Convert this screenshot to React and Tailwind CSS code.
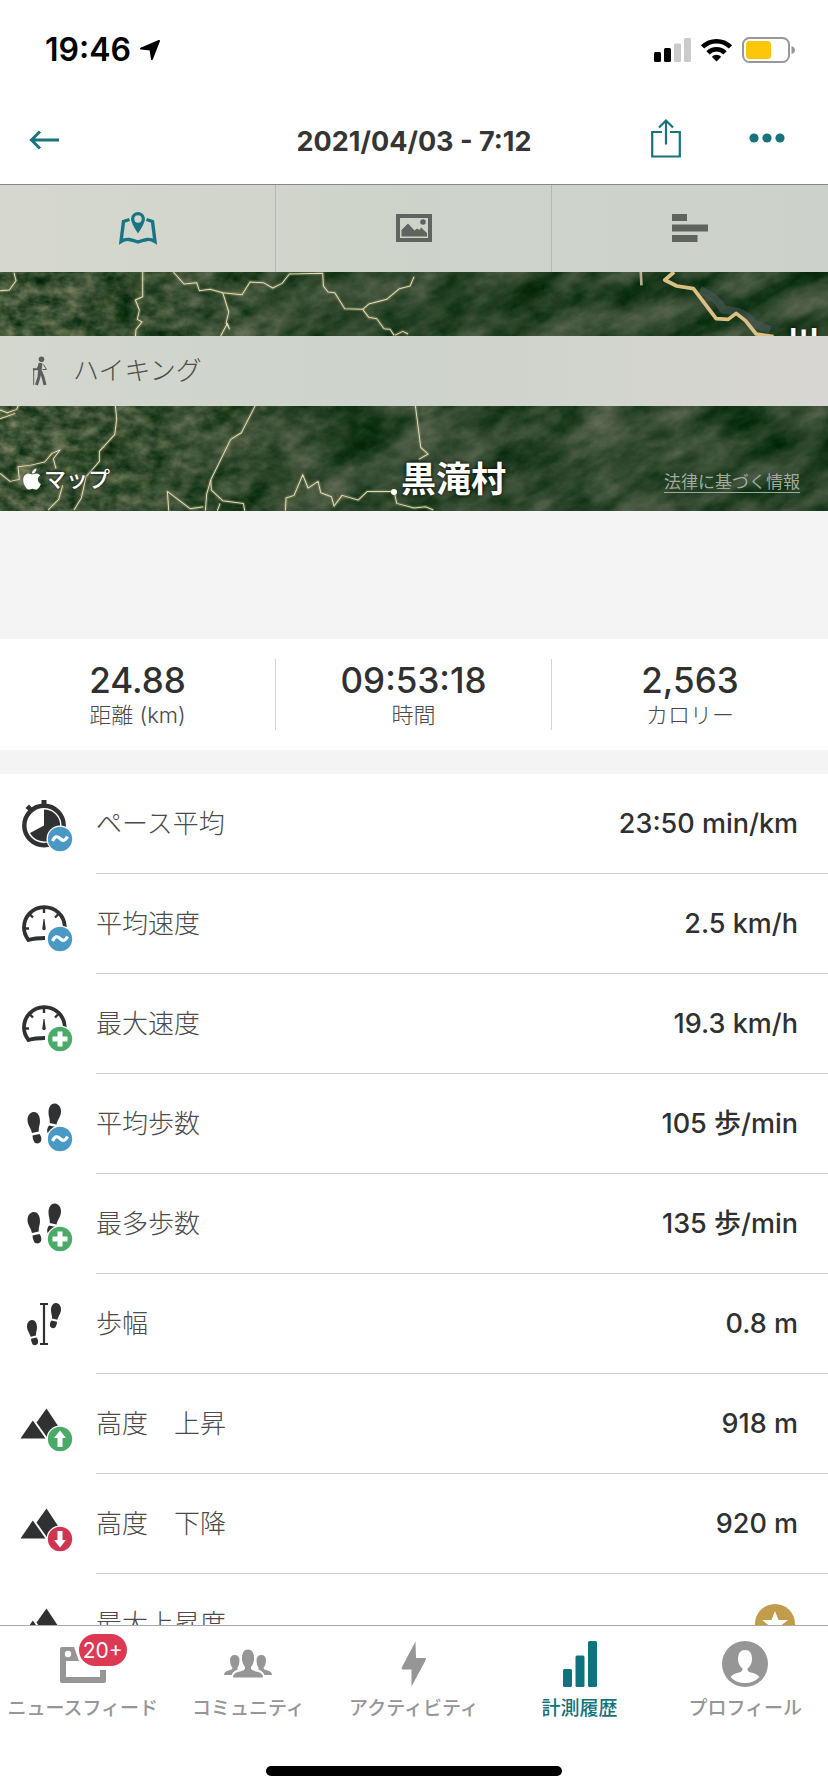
import { FaApple } from "react-icons/fa";

const roads = [
  "M0 92 L28 90 L48 62 L42 38",
  "M428 36 L428 110 L406 120 L418 150 L412 178 L426 186 L408 208 L406 230",
  "M520 36 L552 72 L590 68 L598 92 L630 88 L668 98 L726 104 L750 66 L790 68 L818 84 L846 70 L868 42 L968 40 L970 78 L984 96 L1004 98 L1034 146 L1088 148 L1106 172 L1130 176 L1152 206 L1170 208 L1182 226",
  "M668 98 L686 156 L678 190 L688 206 L682 190 L662 228",
  "M1088 148 L1106 132 L1160 118 L1198 86 L1230 78 L1242 50",
  "M1184 226 L1208 214 L1224 222",
  "M0 450 L22 458 L50 448 L56 434 M0 476 L46 460",
  "M346 436 L350 478 L344 524 L298 574 L298 604 L258 650 L244 714 L222 750",
  "M0 640 L30 664 L58 658 L54 620 L90 616 L134 606 L156 580 L180 570 L160 596 L168 626",
  "M144 750 L176 718 L188 676",
  "M766 436 L724 518 L692 538 L632 660 L620 702 L616 752",
  "M632 660 L634 690 L668 722 L730 730 L734 752",
  "M506 752 L502 694 L570 746 L610 740 M652 752 L660 730",
  "M856 752 L858 714 L882 706 L908 644 L924 684 L954 664 L962 698 L994 710 L1002 738 L1026 706 L1074 720 L1102 694 L1182 694",
  "M1182 694 L1190 730 L1242 744 L1276 740 L1300 750",
  "M1246 438 L1262 562 L1284 582 L1256 598",
];

const DARK = "#303132";

const TerrainMap = () => (
  <svg
    className="absolute inset-0 h-full w-full"
    viewBox="0 0 828 326"
    preserveAspectRatio="xMidYMid slice"
    aria-hidden="true"
  >
    <defs>
      <filter id="forest" x="0" y="0" width="100%" height="100%" colorInterpolationFilters="sRGB">
        <feTurbulence type="fractalNoise" baseFrequency="0.014 0.034" numOctaves="5" seed="8" />
        <feColorMatrix values="0.62 0 0 0 -0.14  0.42 0 0 0 0.06  0.5 0 0 0 -0.08  0 0 0 0 1" />
      </filter>
      <filter id="scrub" x="0" y="0" width="100%" height="100%" colorInterpolationFilters="sRGB">
        <feTurbulence type="fractalNoise" baseFrequency="0.06 0.09" numOctaves="4" seed="3" />
        <feColorMatrix values="0.85 0 0 0 -0.16  0.65 0 0 0 0.02  0.6 0 0 0 -0.08  0 0 0 0 1" />
      </filter>
      <linearGradient id="fade">
        <stop offset="0" stopColor="#fff" stopOpacity="0.8" />
        <stop offset="0.2" stopColor="#fff" stopOpacity="0.5" />
        <stop offset="0.4" stopColor="#fff" stopOpacity="0.2" />
        <stop offset="1" stopColor="#fff" stopOpacity="0.12" />
      </linearGradient>
      <mask id="west">
        <rect width="828" height="326" fill="url(#fade)" />
      </mask>
    </defs>
    <rect width="828" height="326" fill="#2b4429" />
    <g transform="rotate(-28 414 163)">
      <rect x="-100" y="-240" width="1030" height="800" filter="url(#forest)" />
    </g>
    <g mask="url(#west)">
      <rect width="828" height="326" filter="url(#scrub)" />
    </g>
    <g transform="translate(0 75) scale(0.3334)" fill="none" strokeLinejoin="round">
      {roads.map((d) => (
        <path key={d} d={d} stroke="#a08f6c" strokeOpacity="0.35" strokeWidth="11" />
      ))}
      {roads.map((d) => (
        <path key={d} d={d} stroke="#dfe0b4" strokeWidth="3" />
      ))}
      <path d="M2100 90 Q2150 110 2170 150 Q2230 150 2260 190 L2310 210" stroke="#545b63" strokeOpacity="0.5" strokeWidth="24" />
      <path d="M2022 36 L1994 60 L2030 78 L2080 86 L2148 176 L2184 178 L2208 160 L2236 182 L2268 222 L2320 230" stroke="#dcc083" strokeWidth="11" />
      <path d="M1922 36 L1924 76" stroke="#b3b18e" strokeWidth="8" />
    </g>
  </svg>
);

const StatusBar = () => (
  <div className="flex h-[92px] shrink-0 items-center justify-between pt-2 pr-[33px] pl-[45px]">
    <div className="flex items-center gap-2">
      <span className="text-[32px] leading-none font-semibold text-black">19:46</span>
      <svg width="22" height="22" viewBox="0 0 22 22" aria-hidden="true">
        <path d="M20 2 L2 9.6 L11.5 10.6 L13 20 Z" fill="#000" stroke="#000" strokeWidth="2" strokeLinejoin="round" />
      </svg>
    </div>
    <div className="flex items-center gap-[10px]">
      <svg width="37" height="24" viewBox="0 0 37 24" aria-hidden="true">
        <rect x="0" y="14" width="7" height="10" rx="1.5" />
        <rect x="10" y="10" width="7" height="14" rx="1.5" />
        <rect x="20" y="5.500" width="7" height="18.500" rx="1.5" fill="#cbcbcb" />
        <rect x="30" y="0" width="7" height="24" rx="1.5" fill="#cbcbcb" />
      </svg>
      <svg width="31" height="24" viewBox="0 0 31 24" aria-hidden="true">
        <g fill="none" stroke="#000" strokeWidth="4.600">
          <path d="M1.600 9 A19.500 19.500 0 0 1 29.400 9" />
          <path d="M7 14.800 A12 12 0 0 1 24 14.800" />
        </g>
        <path d="M15.500 23.500 L10.800 18.700 A6.800 6.800 0 0 1 20.200 18.700 Z" />
      </svg>
      <svg width="53" height="26" viewBox="0 0 53 26" aria-hidden="true">
        <rect x="1" y="1" width="46" height="24" rx="6.500" fill="#fff" stroke="#98989a" strokeWidth="2" />
        <rect x="4" y="4" width="25" height="18" rx="3.500" fill="#fcc60a" />
        <path d="M49.500 9 Q53 10 53 13 Q53 16 49.500 17 Z" fill="#98989a" />
      </svg>
    </div>
  </div>
);

const Header = () => (
  <header className="grid h-[92px] shrink-0 grid-cols-[1fr_auto_1fr] items-center pr-[43px] pl-[29px] text-[#18737e]">
    <button type="button" aria-label="戻る" className="justify-self-start pt-1">
      <svg width="31" height="20" viewBox="0 0 31 20" fill="none" stroke="currentColor" strokeWidth="3">
        <path d="M30 10 H3 M11 1.500 L2.500 10 L11 18.500" />
      </svg>
    </button>
    <h1 className="pt-1.5 pl-3.5 text-[27px] leading-none font-bold text-[#353535]">2021/04/03 - 7:12</h1>
    <div className="flex items-center gap-[68px] justify-self-end">
      <button type="button" aria-label="共有">
        <svg width="30" height="40" viewBox="0 0 30 40" fill="none" stroke="currentColor" strokeWidth="2.200">
          <path d="M11 14 H1.200 V38.500 H28.800 V14 H19" />
          <path d="M15 26.500 V2 M8 9.500 L15 2.500 L22 9.500" />
        </svg>
      </button>
      <button type="button" aria-label="メニュー">
        <svg width="36" height="10" viewBox="0 0 36 10" fill="currentColor">
          <circle cx="5" cy="5" r="4.600" />
          <circle cx="18" cy="5" r="4.600" />
          <circle cx="31" cy="5" r="4.600" />
        </svg>
      </button>
    </div>
  </header>
);

const MapTabIcon = () => (
  <svg width="38" height="34" viewBox="0 0 38 34" fill="none">
    <path d="M10.500 8.500 L4.500 10.500 L2 30.500 Q6 28 10 28.500 Q15 29.500 19 31 Q23 29.500 28 28.500 Q32 28 36 30.500 L33.500 10.500 L27.500 8.500" stroke="currentColor" strokeWidth="3.400" />
    <path fillRule="evenodd" fill="currentColor" d="M19 1 A7 7 0 0 0 12 8 Q12 12 19 22.500 Q26 12 26 8 A7 7 0 0 0 19 1 Z M19 4.300 A3.700 3.700 0 1 1 19 11.700 A3.700 3.700 0 1 1 19 4.300 Z" />
  </svg>
);

const PhotoTabIcon = () => (
  <svg width="36" height="28" viewBox="0 0 36 28">
    <path fillRule="evenodd" fill="currentColor" d="M0 0 H36 V28 H0 Z M4 4 V24 H32 V4 Z" />
    <path fill="currentColor" d="M5.500 22.500 V16 L12 9.500 L18.500 16.500 L21 14.500 L23.500 16 L25 13.500 L31 19 V22.500 Z" />
    <circle cx="27" cy="8" r="2.800" fill="currentColor" />
  </svg>
);

const ListTabIcon = () => (
  <svg width="36" height="28" viewBox="0 0 36 28" fill="currentColor">
    <rect width="15" height="7" />
    <rect y="10.500" width="36" height="7" />
    <rect y="21" width="25.500" height="7" />
  </svg>
);

const HikerIcon = () => (
  <svg width="17" height="30" viewBox="0 0 17 30" fill="none" stroke="#5b5e5a" strokeLinejoin="round">
    <circle cx="9.500" cy="3.200" r="2.800" fill="#5b5e5a" stroke="none" />
    <path d="M8.500 7 L7.500 15" strokeWidth="4" />
    <path d="M8 8 L5.500 13 L1 13.500" strokeWidth="2" />
    <path d="M11.500 8.500 L14.500 13.500 H10.500" strokeWidth="1" />
    <path d="M1.700 12 V29" strokeWidth="1" />
    <path d="M7.500 15 L7 21 L4.500 29 M8.500 15 L11 21 L13 29" strokeWidth="3" />
  </svg>
);

const badgeColors = { wave: "#4899c4", plus: "#4aab68", up: "#4aab68", down: "#cf3550" };

const Badge = ({ type }) => (
  <g>
    <circle cx="40" cy="43" r="13.500" fill="#fff" />
    <circle cx="40" cy="43" r="12.200" fill={badgeColors[type]} />
    {type === "wave" && <path d="M32.500 45 Q35.500 38 40 42.500 Q44.500 47 47.500 40.500" fill="none" stroke="#fff" strokeWidth="3.200" />}
    {type === "plus" && <path d="M40 35.500 V50.500 M32.500 43 H47.500" stroke="#fff" strokeWidth="5" />}
    {type === "up" && <path d="M40 34.500 L46 42 H42.500 V51 H37.500 V42 H34 Z" fill="#fff" />}
    {type === "down" && <path d="M40 51.500 L46 44 H42.500 V35 H37.500 V44 H34 Z" fill="#fff" />}
  </g>
);

const Sole = () => (
  <>
    <path d="M6 0 C10 -0.500 12.500 4 12.500 9 C12.500 13 11 15 11.200 19.500 L4.500 21 C3.500 16 0 13 0 8 C0 4 2 0.500 6 0 Z" />
    <path d="M5 23.500 L12 22 C13.500 24 14 26 13.800 28 C13.500 31.500 8 33 6.500 29.500 C5.500 27.500 5 25.500 5 23.500 Z" />
  </>
);

const shapes = {
  stopwatch: (
    <>
      <circle cx="24" cy="29.500" r="19.700" fill="none" stroke={DARK} strokeWidth="4.400" />
      <path d="M21.500 4 H26.500 V9 H21.500 Z M5.500 12 L9 8.500 L13 13 L10 16 Z" />
      <path d="M24 29.500 V13.500 A16 16 0 1 1 10 37 Z" />
    </>
  ),
  gauge: (
    <>
      <path d="M25 42 Q15 42 8.500 44 Q4 38 4 32 A20 20 0 0 1 44.800 31" fill="none" stroke={DARK} strokeWidth="3.800" />
      <path d="M24 12 V17 M10 18.500 L13 21.500 M38 18.500 L35 21.500 M5 32.500 H9" stroke={DARK} strokeWidth="2.400" />
      <path d="M23.500 23 H24.500 L25.700 32.500 A1.700 1.700 0 0 1 22.300 32.500 Z" />
    </>
  ),
  steps: (
    <>
      <g transform="translate(7.500 16)">
        <Sole />
      </g>
      <g transform="translate(41 7.500) scale(-1 1)">
        <Sole />
      </g>
    </>
  ),
  stride: (
    <>
      <g transform="translate(7 24) scale(0.8)">
        <Sole />
      </g>
      <g transform="translate(41 7) scale(-0.8 0.8)">
        <Sole />
      </g>
      <path d="M24 8 V48 M20 8 H28 M20 48 H28" stroke={DARK} strokeWidth="2.200" />
    </>
  ),
  mountain: (
    <>
      <path d="M26.500 12.500 L46 42 H27.500 L16.500 26.500 Z" />
      <path d="M12.800 24.500 L25.500 42.500 H0.500 Z" />
    </>
  ),
};

const MetricIcon = ({ shape, badge }) => (
  <svg width="56" height="56" viewBox="0 0 56 56" fill={DARK} aria-hidden="true">
    {shapes[shape]}
    {badge && <Badge type={badge} />}
  </svg>
);

const StarBadge = () => (
  <svg className="mr-[3px]" width="40" height="40" viewBox="0 0 40 40" aria-hidden="true">
    <circle cx="20" cy="20" r="20" fill="#c09c4b" />
    <path d="M20 7 L23.500 16 H33 L25.500 22 L28 31 L20 26 L12 31 L14.500 22 L7 16 H16.500 Z" fill="#fff" />
  </svg>
);

const summary = [
  { value: "24.88", label: "距離 (km)" },
  { value: "09:53:18", label: "時間" },
  { value: "2,563", label: "カロリー" },
];

const metrics = [
  { label: "ペース平均", value: "23:50 min/km", shape: "stopwatch", badge: "wave" },
  { label: "平均速度", value: "2.5 km/h", shape: "gauge", badge: "wave" },
  { label: "最大速度", value: "19.3 km/h", shape: "gauge", badge: "plus" },
  { label: "平均歩数", value: "105 歩/min", shape: "steps", badge: "wave" },
  { label: "最多歩数", value: "135 歩/min", shape: "steps", badge: "plus" },
  { label: "歩幅", value: "0.8 m", shape: "stride" },
  { label: "高度　上昇", value: "918 m", shape: "mountain", badge: "up" },
  { label: "高度　下降", value: "920 m", shape: "mountain", badge: "down" },
  { label: "最大上昇度", value: <StarBadge />, shape: "mountain", badge: "up" },
];

const tabs = [
  { label: "地図", icon: <MapTabIcon />, active: true },
  { label: "写真", icon: <PhotoTabIcon /> },
  { label: "詳細", icon: <ListTabIcon /> },
];

const navItems = [
  {
    label: "ニュースフィード",
    count: "20+",
    icon: (
      <svg width="46" height="46" viewBox="0 0 46 46">
        <path fillRule="evenodd" fill="currentColor" d="M2 6 H44 Q46 6 46 8 V40 Q46 42 44 42 H2 Q0 42 0 40 V8 Q0 6 2 6 Z M6 20 V36 H40 V20 Z" />
        <circle cx="8" cy="13" r="3.200" fill="#fff" />
        <path d="M14 6 H46 V29 H40 V20 H19 Z" fill="#fff" />
      </svg>
    ),
  },
  {
    label: "コミュニティ",
    icon: (
      <svg width="48" height="46" viewBox="0 0 48 46" fill="currentColor">
        <path d="M0 34 Q0 30.500 4.500 29.500 Q8.500 28.500 8.500 27 Q6 24 6 19.500 Q6 14 10.800 14 Q15.500 14 15.500 19.500 Q15.500 24 13.500 26.500 L13.500 28.500 Q9 30 7.500 34 Z" />
        <path d="M48 34 Q48 30.500 43.500 29.500 Q39.500 28.500 39.500 27 Q42 24 42 19.500 Q42 14 37.200 14 Q32.500 14 32.500 19.500 Q32.500 24 34.500 26.500 L34.500 28.500 Q39 30 40.500 34 Z" />
        <path d="M9 36.500 Q9 32 14 31 Q21 29.500 21 27.500 V26 Q18.500 23 18 19 Q17.500 8.500 24 8.500 Q30.500 8.500 30 19 Q29.500 23 27 26 V27.500 Q27 29.500 34 31 Q39 32 39 36.500 Z" />
      </svg>
    ),
  },
  {
    label: "アクティビティ",
    icon: (
      <svg width="26" height="46" viewBox="0 0 26 46" fill="currentColor">
        <path d="M14.500 0.500 L0.500 27 Q0.500 28.500 2 28.500 H10.500 V45.500 L25 18.500 Q25.500 17 24 17 H15 Z" />
      </svg>
    ),
  },
  {
    label: "計測履歴",
    active: true,
    icon: (
      <svg width="34" height="46" viewBox="0 0 34 46" fill="currentColor">
        <rect y="28" width="9" height="18" rx="1.500" />
        <rect x="12.500" y="14.500" width="9" height="31.500" rx="1.500" />
        <rect x="25" width="9" height="46" rx="1.500" />
      </svg>
    ),
  },
  {
    label: "プロフィール",
    icon: (
      <svg width="46" height="46" viewBox="0 0 46 46">
        <circle cx="23" cy="23" r="23" fill="currentColor" />
        <path d="M8.500 36 Q11 32.500 17 31.500 Q21 30.500 20.500 27.500 Q16 24 16 18 Q16 9 23 9 Q30 9 30 18 Q30 24 25.500 27.500 Q25 30.500 29 31.500 Q35 32.500 37.500 36 Q32 42 23 42 Q14 42 8.500 36 Z" fill="#fff" />
      </svg>
    ),
  },
];

const App = () => {
  return (
    <div className="flex h-screen flex-col overflow-hidden bg-white font-['Inter','Noto_Sans_CJK_JP',sans-serif]">
      <StatusBar />
      <Header />

      <main className="min-h-0 flex-1 overflow-hidden bg-[#f4f4f4]">
        <section className="relative flex flex-col border-t border-[#868a84]">
          <TerrainMap />

          <div className="relative grid h-[87px] grid-cols-3 divide-x divide-[#b4b8b0] bg-linear-to-r from-[#d6d8cf] via-[#ced3ca] to-[#cdd1cb]">
            {tabs.map((tab) => (
              <button
                key={tab.label}
                type="button"
                aria-label={tab.label}
                className={tab.active ? "flex items-center justify-center pb-0.5 text-[#187684]" : "flex items-center justify-center pb-0.5 text-[#60645f]"}
              >
                {tab.icon}
              </button>
            ))}
          </div>

          <div className="relative h-16 overflow-hidden">
            <span className="absolute top-[54px] right-2 text-[34px] leading-none font-bold text-white text-shadow-[0_0_4px_#000]">川</span>
          </div>

          <div className="relative flex h-[70px] items-center gap-6 bg-linear-to-r from-[#d3d7ce] via-[#ced3cb] to-[#d8d6d2] pl-8">
            <HikerIcon />
            <span className="text-[26px] leading-none font-light text-[#4c4f4b]">ハイキング</span>
          </div>

          <div className="relative flex h-[105px] items-end justify-between pr-7 pb-5 pl-5">
            <span className="flex items-center text-[22px] leading-none font-medium text-white text-shadow-[0_0_3px_#000]">
              <FaApple size={24} />
              マップ
            </span>
            <span className="absolute bottom-[14px] left-[391px] flex items-end text-[35px] leading-none font-bold text-white text-shadow-[0_0_4px_#000]">
              <i className="mb-0.5 h-1.5 w-1.5 rounded-full bg-white" />
              <span className="pl-1">黒滝村</span>
            </span>
            <a href="#legal" className="text-[17px] leading-none text-[#a3a9a0] underline underline-offset-4">
              法律に基づく情報
            </a>
          </div>
        </section>

        <dl className="mt-32 mb-6 grid grid-cols-3 bg-white py-5">
          {summary.map((item) => (
            <div key={item.label} className="flex h-[71px] flex-col-reverse items-center justify-center gap-1.5 border-r border-[#d4d4d4] last:border-r-0">
              <dt className="text-[22px] leading-none font-light text-[#4a4a4a]">{item.label}</dt>
              <dd className="text-[35px] leading-none font-medium text-[#303031]">{item.value}</dd>
            </div>
          ))}
        </dl>

        <dl className="bg-white">
          {metrics.map((metric) => (
            <div key={metric.label} className="flex h-[100px] items-center gap-5 pl-5">
              <MetricIcon shape={metric.shape} badge={metric.badge} />
              <div className="flex h-full flex-1 items-center justify-between border-b border-[#cfcfcf] pr-[30px]">
                <dt className="text-[26px] leading-none font-light text-[#4a4a4a]">{metric.label}</dt>
                <dd className="text-[27px] leading-none font-medium text-[#303031]">{metric.value}</dd>
              </div>
            </div>
          ))}
        </dl>
      </main>

      <nav className="shrink-0 border-t border-[#a9a9a6] bg-white">
        <div className="grid grid-cols-5 pt-[15px]">
          {navItems.map((item) => (
            <a
              key={item.label}
              href="#nav"
              className={
                item.active
                  ? "flex flex-col items-center gap-3 text-[19px] leading-5 font-medium whitespace-nowrap text-[#10727c]"
                  : "flex flex-col items-center gap-3 text-[19px] leading-5 font-medium whitespace-nowrap text-[#969696]"
              }
            >
              <span className="relative">
                {item.icon}
                {item.count && (
                  <span className="absolute -top-[9px] left-[17px] flex h-9 items-center rounded-full border-2 border-white bg-[#db3a52] px-1 text-[21px] leading-none font-normal text-white">
                    {item.count}
                  </span>
                )}
              </span>
              {item.label}
            </a>
          ))}
        </div>
        <div className="mx-auto mt-[47px] mb-4 h-[10px] w-[296px] rounded-full bg-black" />
      </nav>
    </div>
  );
};

export default App;
